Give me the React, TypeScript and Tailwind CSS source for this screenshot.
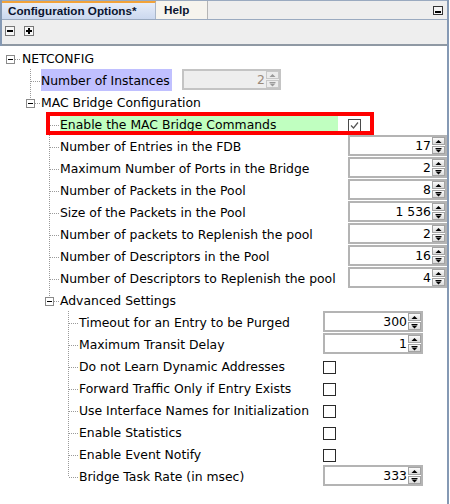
import React from "react";

type Ctrl =
  | { kind: "spin"; value: string; disabled?: boolean; w: string }
  | { kind: "check"; checked?: boolean };

type Node = {
  label: string;
  indent: string;
  line: "root" | "mid" | "last";
  expander?: boolean;
  labelW?: string;
  hl?: string;
  ctrl?: Ctrl;
  mark?: boolean;
};

const L2 = "w-[278px]";
const L3 = "w-[234px]";

const nodes: Node[] = [
  { label: "NETCONFIG", indent: "pl-[6px]", line: "root", expander: true },
  { label: "Number of Instances", indent: "pl-[26px]", line: "mid", labelW: "w-[131px]", hl: "bg-[#c0c0ff]", ctrl: { kind: "spin", value: "2", disabled: true, w: "w-[99px]" } },
  { label: "MAC Bridge Configuration", indent: "pl-[26px]", line: "last", expander: true },
  { label: "Enable the MAC Bridge Commands", indent: "pl-[45px]", line: "mid", labelW: L2, hl: "bg-[#c0ffc0]", ctrl: { kind: "check", checked: true }, mark: true },
  { label: "Number of Entries in the FDB", indent: "pl-[45px]", line: "mid", labelW: L2, ctrl: { kind: "spin", value: "17", w: "w-[99px]" } },
  { label: "Maximum Number of Ports in the Bridge", indent: "pl-[45px]", line: "mid", labelW: L2, ctrl: { kind: "spin", value: "2", w: "w-[99px]" } },
  { label: "Number of Packets in the Pool", indent: "pl-[45px]", line: "mid", labelW: L2, ctrl: { kind: "spin", value: "8", w: "w-[99px]" } },
  { label: "Size of the Packets in the Pool", indent: "pl-[45px]", line: "mid", labelW: L2, ctrl: { kind: "spin", value: "1 536", w: "w-[99px]" } },
  { label: "Number of packets to Replenish the pool", indent: "pl-[45px]", line: "mid", labelW: L2, ctrl: { kind: "spin", value: "2", w: "w-[99px]" } },
  { label: "Number of Descriptors in the Pool", indent: "pl-[45px]", line: "mid", labelW: L2, ctrl: { kind: "spin", value: "16", w: "w-[99px]" } },
  { label: "Number of Descriptors to Replenish the pool", indent: "pl-[45px]", line: "mid", labelW: L2, ctrl: { kind: "spin", value: "4", w: "w-[99px]" } },
  { label: "Advanced Settings", indent: "pl-[45px]", line: "last", expander: true },
  { label: "Timeout for an Entry to be Purged", indent: "pl-[64px]", line: "mid", labelW: L3, ctrl: { kind: "spin", value: "300", w: "w-[100px]" } },
  { label: "Maximum Transit Delay", indent: "pl-[64px]", line: "mid", labelW: L3, ctrl: { kind: "spin", value: "1", w: "w-[100px]" } },
  { label: "Do not Learn Dynamic Addresses", indent: "pl-[64px]", line: "mid", labelW: L3, ctrl: { kind: "check" } },
  { label: "Forward Traffic Only if Entry Exists", indent: "pl-[64px]", line: "mid", labelW: L3, ctrl: { kind: "check" } },
  { label: "Use Interface Names for Initialization", indent: "pl-[64px]", line: "mid", labelW: L3, ctrl: { kind: "check" } },
  { label: "Enable Statistics", indent: "pl-[64px]", line: "mid", labelW: L3, ctrl: { kind: "check" } },
  { label: "Enable Event Notify", indent: "pl-[64px]", line: "mid", labelW: L3, ctrl: { kind: "check" } },
  { label: "Bridge Task Rate (in msec)", indent: "pl-[64px]", line: "last", labelW: L3, ctrl: { kind: "spin", value: "333", w: "w-[100px]" } },
];

function Connector({ line, expander }: { line: Node["line"]; expander?: boolean }) {
  const dot = { stroke: "#9a9a9a", strokeWidth: 1, strokeDasharray: "1 1" };
  return (
    <svg width="15" height="22" className="shrink-0">
      {line === "mid" && <line x1="4.5" y1="0" x2="4.5" y2="22" {...dot} />}
      {line === "last" && <line x1="4.5" y1="0" x2="4.5" y2={expander ? 8 : 12} {...dot} />}
      <line x1={expander ? 9 : 5} y1="12.5" x2="15" y2="12.5" {...dot} />
      {expander && (
        <g>
          <rect x="0.5" y="8.5" width="8" height="8" fill="#fff" stroke="#8a8a8a" />
          <line x1="2" y1="12.5" x2="7" y2="12.5" stroke="#000" />
        </g>
      )}
    </svg>
  );
}

function Arrow({ up, dim }: { up?: boolean; dim?: boolean }) {
  const c = dim ? "#9a9a9a" : "#000";
  return (
    <svg width="7" height="5">
      {up ? (
        <polygon points="0.5,4 3.5,1 6.5,4" fill={c} />
      ) : (
        <g>
          <line x1="0.5" y1="0.5" x2="6.5" y2="0.5" stroke={c} />
          <polygon points="0.5,1.5 3.5,4.5 6.5,1.5" fill={c} />
        </g>
      )}
    </svg>
  );
}

function Spinner({ value, disabled, w }: { value: string; disabled?: boolean; w: string }) {
  const btn = `flex-1 flex items-center justify-center border ${
    disabled ? "border-[#c8c8c8] bg-[#ececec]" : "border-[#a3a3a3] bg-linear-to-b from-[#fbfbfb] to-[#dcdcdc]"
  }`;
  return (
    <div className={`flex h-[21px] ${w} border-2 ${disabled ? "border-[#c4c4c4] bg-[#eeeeee] text-[#9a8a7a]" : "border-[#b4b4b4] bg-white text-black"}`}>
      <div className="flex-1 flex items-center justify-end pr-[1px] pt-[1px] text-[12.4px]">{value}</div>
      <div className="w-[13px] flex flex-col gap-[1px]">
        <div className={btn}>
          <Arrow up dim={disabled} />
        </div>
        <div className={btn}>
          <Arrow dim={disabled} />
        </div>
      </div>
    </div>
  );
}

function Check({ checked }: { checked?: boolean }) {
  return (
    <div className={`w-[13px] h-[13px] border ${checked ? "border-[#4a4a4a]" : "border-[#2a2a2a]"} bg-white flex items-center justify-center`}>
      {checked && (
        <svg width="11" height="11">
          <polyline points="2,5.5 4.5,8 9,2.5" fill="none" stroke="#555" strokeWidth="1.2" />
        </svg>
      )}
    </div>
  );
}

function Row({ n }: { n: Node }) {
  return (
    <div className={`relative flex h-[22px] items-start ${n.indent}`}>
      <Connector line={n.line} expander={n.expander} />
      {n.line === "root" && <div className="w-[1px]" />}
      <div className={`${n.labelW ?? ""} ${n.hl ?? ""} h-[22px] pt-[3px] flex items-center whitespace-nowrap shrink-0`}>{n.label}</div>
      {n.ctrl && (
        <div className="ml-[10px] h-[22px] flex items-center">
          {n.ctrl.kind === "spin" ? (
            <div className="self-start">
              <Spinner value={n.ctrl.value} disabled={n.ctrl.disabled} w={n.ctrl.w} />
            </div>
          ) : (
            <div className="pt-[2px]">
              <Check checked={n.ctrl.checked} />
            </div>
          )}
        </div>
      )}
      {n.mark && <div className="absolute left-[46px] top-[-1px] w-[328px] h-[23px] border-4 border-[#ff0000] pointer-events-none" />}
    </div>
  );
}

export default function App() {
  return (
    <div className="w-[450px] h-[504px] bg-white font-['DejaVu_Sans',sans-serif] text-[12.4px] text-black overflow-hidden">
      <div className="w-[449px] h-[504px] flex flex-col border-l-2 border-r-2 border-[#8599b4]">
        {/* Tabs */}
        <div className="flex h-[20px] shrink-0 border-t border-b border-[#9aaac0] bg-[#eeeeee] font-['Liberation_Sans',sans-serif] font-bold text-[11.7px] text-[#0b1530]">
          <div className="w-[154px] border-t-2 border-[#f2a33a] bg-linear-to-b from-[#e6edf9] to-[#cbd8ef] border-r border-r-[#a9b6c8] pl-[6px] flex items-center">
            Configuration Options*
          </div>
          <div className="w-[52px] bg-[#f6f4ee] border-r border-[#b5b5b5] rounded-tl-[3px] pl-[8px] flex items-center">Help</div>
          <div className="flex-1" />
          <div className="mr-[4px] mt-[5px] w-[10px] h-[9px] border border-[#333] bg-[#f4f4f4] flex items-end justify-center pb-[1px]">
            <div className="w-[6px] h-[2px] bg-black" />
          </div>
        </div>

        {/* Toolbar */}
        <div className="h-[26px] shrink-0 bg-[#eeeeee] border-b-2 border-[#8f99a4] flex items-start gap-[9px] pl-[3px] pt-[6px]">
          <div className="w-[10px] h-[10px] border border-[#777] bg-[#f6f6f6] flex items-center justify-center">
            <div className="w-[6px] h-[2px] bg-black" />
          </div>
          <div className="w-[10px] h-[10px] border border-[#777] bg-[#f6f6f6] flex items-center justify-center relative">
            <div className="w-[6px] h-[2px] bg-black" />
            <div className="absolute w-[2px] h-[6px] bg-black" />
          </div>
        </div>

        {/* Tree */}
        <div className="flex-1 bg-white pt-[1px] -ml-[2px]">
          {nodes.map((n) => (
            <Row key={n.label} n={n} />
          ))}
        </div>
      </div>
    </div>
  );
}
